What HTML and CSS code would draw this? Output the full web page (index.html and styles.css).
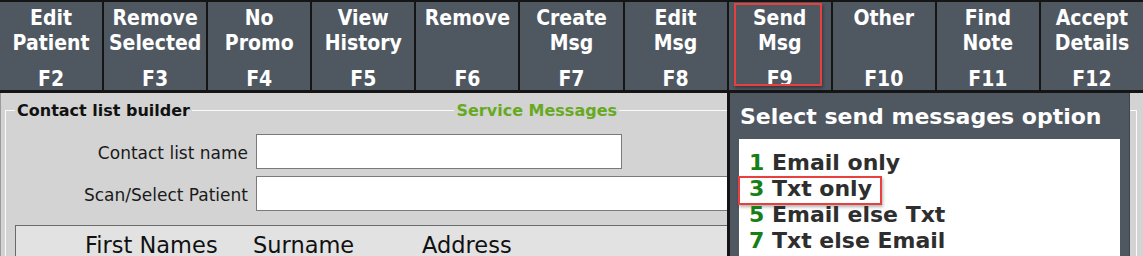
FILE: index.html
```html
<!DOCTYPE html>
<html lang="en">
<head>
    <meta charset="UTF-8">
    <meta name="viewport" content="width=device-width, initial-scale=1.0">
    <title>Service Messages</title>
    <link rel="stylesheet" href="styles.css">
</head>
<body>
    <div class="toolbar">
        <div class="fkey"><span class="fkey-label">Edit<br>Patient</span><span class="fkey-code">F2</span></div>
        <div class="fkey"><span class="fkey-label">Remove<br>Selected</span><span class="fkey-code">F3</span></div>
        <div class="fkey"><span class="fkey-label">No<br>Promo</span><span class="fkey-code">F4</span></div>
        <div class="fkey"><span class="fkey-label">View<br>History</span><span class="fkey-code">F5</span></div>
        <div class="fkey"><span class="fkey-label">Remove</span><span class="fkey-code">F6</span></div>
        <div class="fkey"><span class="fkey-label">Create<br>Msg</span><span class="fkey-code">F7</span></div>
        <div class="fkey"><span class="fkey-label">Edit<br>Msg</span><span class="fkey-code">F8</span></div>
        <div class="fkey is-marked"><span class="fkey-label">Send<br>Msg</span><span class="fkey-code">F9</span></div>
        <div class="fkey"><span class="fkey-label">Other</span><span class="fkey-code">F10</span></div>
        <div class="fkey"><span class="fkey-label">Find<br>Note</span><span class="fkey-code">F11</span></div>
        <div class="fkey"><span class="fkey-label">Accept<br>Details</span><span class="fkey-code">F12</span></div>
    </div>

    <div class="workspace">
        <fieldset class="group">
            <legend class="group-legend">
                <span>Contact list builder</span>
                <span class="legend-rule"></span>
                <span class="legend-accent">Service Messages</span>
            </legend>

            <div class="form-grid">
                <label class="form-label" for="listName">Contact list name</label>
                <input class="field field-short" id="listName" type="text">
                <label class="form-label" for="patient">Scan/Select Patient</label>
                <input class="field field-long" id="patient" type="text">
            </div>

            <div class="contact-table">
                <div class="table-head">
                    <span>First Names</span>
                    <span>Surname</span>
                    <span>Address</span>
                </div>
            </div>
        </fieldset>

        <!-- Send options popup -->
        <div class="send-popup">
            <div class="popup-title">Select send messages option</div>
            <div class="popup-body">
                <div class="option"><span class="option-key">1</span> Email only</div>
                <div class="option is-marked"><span class="option-key">3</span> Txt only</div>
                <div class="option"><span class="option-key">5</span> Email else Txt</div>
                <div class="option"><span class="option-key">7</span> Txt else Email</div>
            </div>
        </div>
    </div>
</body>
</html>
```

FILE: styles.css
```css
/* General Styles */
body {
    margin: 0;
    width: 1143px;
    height: 256px;
    overflow: hidden;
    background: #d3d3d3;
    font-family: "DejaVu Sans", Verdana, sans-serif;
    color: #1a1a1a;
}

/* Function key toolbar */
.toolbar {
    display: grid;
    grid-template-columns: repeat(11, 1fr);
    gap: 2px;
    background: #151515;
    border-top: 2px solid #151515;
    border-bottom: 3px solid #151515;
}

.fkey {
    position: relative;
    height: 88px;
    box-sizing: border-box;
    padding: 4px 0 1px;
    display: flex;
    flex-direction: column;
    justify-content: space-between;
    align-items: center;
    text-align: center;
    background: #4f5761;
    color: #fff;
    font-family: "DejaVu Sans Condensed", "DejaVu Sans", sans-serif;
    font-weight: bold;
    font-size: 21px;
}

.fkey-label {
    line-height: 25px;
}

.fkey-code {
    line-height: 20px;
}

.fkey.is-marked::after {
    content: "";
    position: absolute;
    left: 5px;
    top: 1px;
    width: 88px;
    height: 83px;
    box-sizing: border-box;
    border: 2px solid #e8403f;
    box-shadow: 1px 2px 3px rgba(0, 0, 0, 0.35);
}

/* Workspace */
.workspace {
    position: relative;
    height: 163px;
    box-sizing: border-box;
    padding-top: 8px;
    border-left: 1px solid #9b9b9b;
}

.group {
    margin: 0 0 0 4px;
    width: 1132px;
    box-sizing: border-box;
    padding: 0 9px 20px 9px;
    border: 1px solid #fafafa;
    min-width: 0;
}

.group-legend {
    display: flex;
    align-items: center;
    width: 604px;
    padding: 0 2px;
    box-sizing: border-box;
    font-weight: bold;
    font-size: 16px;
    line-height: 19px;
    color: #111;
}

.legend-rule {
    flex: 1;
    height: 1px;
    margin: 0 2px;
    background: #fafafa;
}

.legend-accent {
    color: #67a91f;
}

.form-grid {
    display: grid;
    grid-template-columns: 233px auto;
    column-gap: 8px;
    row-gap: 7px;
    align-items: center;
    justify-items: start;
    margin-top: 14px;
}

.form-label {
    justify-self: end;
    padding-top: 3px;
    font-size: 17px;
}

.field {
    height: 35px;
    box-sizing: border-box;
    border: 1px solid #7a7a7a;
    background: #fff;
    margin: 0;
}

.field-short {
    width: 366px;
}

.field-long {
    width: 760px;
}

.contact-table {
    margin-top: 14px;
    height: 80px;
    border: 1px solid #6a6a6a;
    background: #e2e2e2;
}

.table-head {
    display: grid;
    grid-template-columns: 168px 169px 200px;
    padding: 4px 0 0 69px;
    font-size: 22.5px;
    line-height: 30px;
    color: #111;
}

/* Send options popup */
.send-popup {
    position: absolute;
    left: 726px;
    top: 0;
    bottom: 0;
    width: 403px;
    box-sizing: border-box;
    padding: 11px 9px 0 9px;
    background: #4f5761;
    border-left: 3px solid #151515;
    border-right: 1px solid #3f454d;
}

.popup-title {
    color: #fff;
    font-weight: bold;
    font-size: 22px;
    line-height: 26px;
    white-space: nowrap;
    padding-left: 1px;
}

.popup-body {
    margin-top: 9px;
    height: 120px;
    padding: 11px 0 0 10px;
    background: #fff;
}

.option {
    position: relative;
    font-weight: bold;
    font-size: 22px;
    line-height: 26px;
    color: #2e2e2e;
}

.option-key {
    color: #168016;
}

.option.is-marked::after {
    content: "";
    position: absolute;
    left: -11px;
    top: 0;
    width: 144px;
    height: 29px;
    box-sizing: border-box;
    border: 2px solid #e8403f;
    box-shadow: 1px 2px 3px rgba(0, 0, 0, 0.3);
}
```
